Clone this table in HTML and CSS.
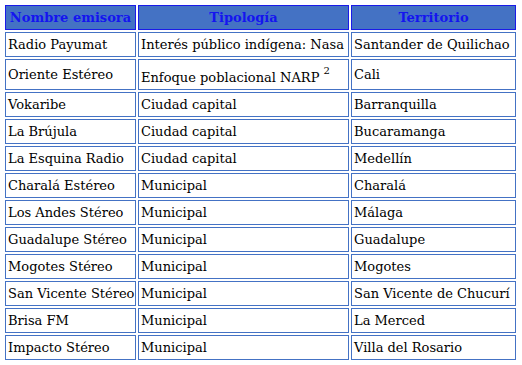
FILE: index.html
```html
<!DOCTYPE html>
<html lang="es">
<head>
<meta charset="utf-8">
<link rel="stylesheet" href="styles.css">
</head>
<body>
<table class="emisoras">
  <thead>
    <tr>
      <th class="c1">Nombre emisora</th>
      <th class="c2">Tipología</th>
      <th class="c3">Territorio</th>
    </tr>
  </thead>
  <tbody>
    <tr><td>Radio Payumat</td><td>Interés público indígena: Nasa</td><td>Santander de Quilichao</td></tr>
    <tr><td>Oriente Estéreo</td><td>Enfoque poblacional NARP <sup>2</sup></td><td>Cali</td></tr>
    <tr><td>Vokaribe</td><td>Ciudad capital</td><td>Barranquilla</td></tr>
    <tr><td>La Brújula</td><td>Ciudad capital</td><td>Bucaramanga</td></tr>
    <tr><td>La Esquina Radio</td><td>Ciudad capital</td><td>Medellín</td></tr>
    <tr><td>Charalá Estéreo</td><td>Municipal</td><td>Charalá</td></tr>
    <tr><td>Los Andes Stéreo</td><td>Municipal</td><td>Málaga</td></tr>
    <tr><td>Guadalupe Stéreo</td><td>Municipal</td><td>Guadalupe</td></tr>
    <tr><td>Mogotes Stéreo</td><td>Municipal</td><td>Mogotes</td></tr>
    <tr><td>San Vicente Stéreo</td><td>Municipal</td><td>San Vicente de Chucurí</td></tr>
    <tr><td>Brisa FM</td><td>Municipal</td><td>La Merced</td></tr>
    <tr><td>Impacto Stéreo</td><td>Municipal</td><td>Villa del Rosario</td></tr>
  </tbody>
</table>
</body>
</html>
```
FILE: styles.css
```css
html, body {
  margin: 0;
  padding: 0;
  background: #ffffff;
}
body {
  padding: 3px;
  font-family: "DejaVu Serif", serif;
  font-size: 13px;
  color: #000000;
}
.emisoras {
  border-collapse: separate;
  border-spacing: 2px;
  table-layout: fixed;
  width: 515px;
  font-size: 13px;
}
.emisoras th {
  background: #4472c4;
  color: #1414f0;
  border: 1px solid #1a1ae8;
  font-weight: bold;
  font-size: 13px;
  line-height: 17px;
  padding: 3px 2px;
  text-align: center;
}
.emisoras td {
  border: 1px solid #4472c4;
  line-height: 17px;
  padding: 3px 2px;
  vertical-align: middle;
  white-space: nowrap;
  overflow: hidden;
}
.c1 { width: 125px; }
.c2 { width: 205px; }
.c3 { width: 159px; }
sup {
  font-size: 10px;
  vertical-align: 8px;
  line-height: 15px;
}
```
